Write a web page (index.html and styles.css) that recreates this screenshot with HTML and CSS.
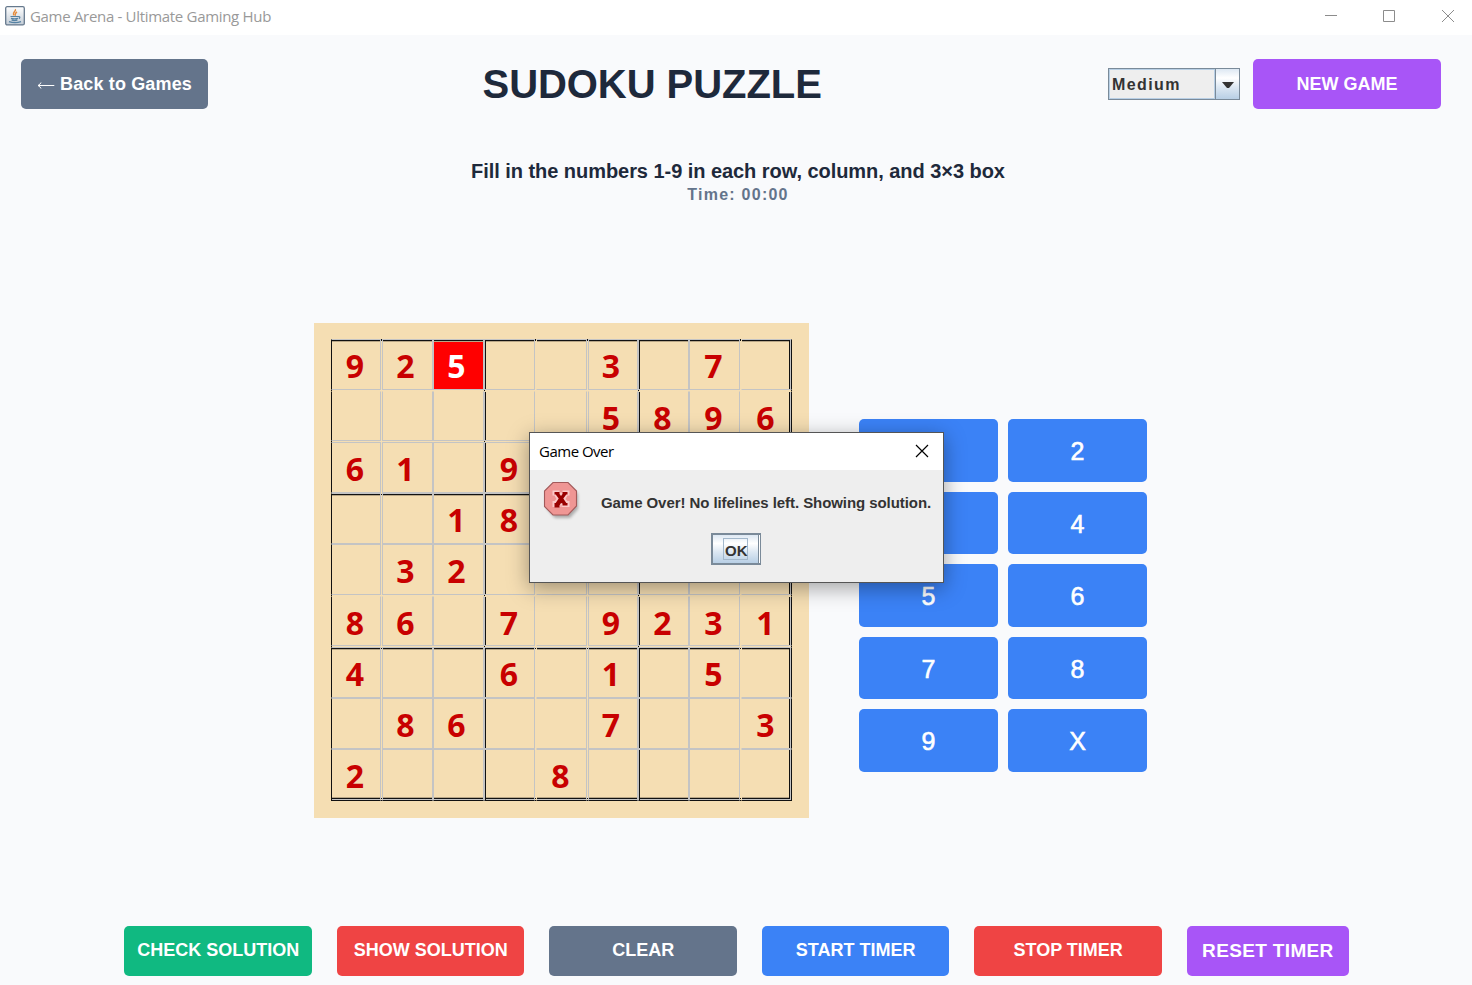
FILE: index.html
```html
<!DOCTYPE html>
<html lang="en">
<head>
<meta charset="utf-8">
<title>Game Arena - Ultimate Gaming Hub</title>
<link rel="stylesheet" href="styles.css">
</head>
<body>
<div class="titlebar">
  <svg class="java" width="20" height="20" viewBox="0 0 20 20">
    <defs><linearGradient id="jg" x1="0" y1="0" x2="0" y2="1"><stop offset="0" stop-color="#fff"/><stop offset="1" stop-color="#c3ccd6"/></linearGradient></defs>
    <rect x=".7" y=".7" width="18.6" height="18.2" rx="1.5" fill="url(#jg)" stroke="#66798d" stroke-width="1.3"/>
    <path d="M10.3 3.2C11.6 5 7 6.4 8.6 9.3M12 6C9.4 7.4 10.6 8.4 10 9.8" fill="none" stroke="#e58a3a" stroke-width="1.5"/>
    <path d="M5.5 10.5h8M6 12.4q3.800 1 7 0M6.600 14.200q3 .8 5.800 0M13.500 10.600q2.500.2.500 2.200" fill="none" stroke="#5682a3" stroke-width="1.200"/>
    <path d="M4 15.600q6 2 12 0" fill="none" stroke="#5682a3" stroke-width="1.200"/>
  </svg>
  <span class="app-title">Game Arena - Ultimate Gaming Hub</span>
  <svg class="winctl" width="130" height="14" viewBox="0 0 130 14" fill="none" stroke="#8c8c8c">
    <path d="M0 6.500h12M58.500 1.500h11v11h-11zM117 1l12 12M129 1l-12 12"/>
  </svg>
</div>

<header class="header">
  <button class="btn slate back"><svg width="18" height="10" viewBox="0 0 18 10" fill="none" stroke="#fff" stroke-width="1"><path d="M1 5.500h16.300M4 2.500q-.8 2-3 3q2.200 1 3 3"/></svg><span>Back to Games</span></button>
  <h1>SUDOKU PUZZLE</h1>
  <div class="combo"><span class="combo-value">Medium</span><span class="combo-arrow"><svg width="12" height="7" viewBox="0 0 12 7"><path d="M0 0h12L7 6H5z" fill="#333"/></svg></span></div>
  <button class="btn purple new">NEW GAME</button>
</header>

<div class="info">
  <p class="hint">Fill in the numbers 1-9 in each row, column, and 3×3 box</p>
  <p class="time">Time: 00:00</p>
</div>

<main class="main">
  <div class="board">
    <div class="grid">
      <div class="row"><b>9</b><b>2</b><b class="wrong">5</b><b></b><b></b><b>3</b><b></b><b>7</b><b></b></div>
      <div class="row"><b></b><b></b><b></b><b></b><b></b><b>5</b><b>8</b><b>9</b><b>6</b></div>
      <div class="row"><b>6</b><b>1</b><b></b><b>9</b><b></b><b></b><b></b><b></b><b></b></div>
      <div class="row"><b></b><b></b><b>1</b><b>8</b><b></b><b></b><b></b><b></b><b></b></div>
      <div class="row"><b></b><b>3</b><b>2</b><b></b><b></b><b>6</b><b>9</b><b>8</b><b></b></div>
      <div class="row"><b>8</b><b>6</b><b></b><b>7</b><b></b><b>9</b><b>2</b><b>3</b><b>1</b></div>
      <div class="row"><b>4</b><b></b><b></b><b>6</b><b></b><b>1</b><b></b><b>5</b><b></b></div>
      <div class="row"><b></b><b>8</b><b>6</b><b></b><b></b><b>7</b><b></b><b></b><b>3</b></div>
      <div class="row"><b>2</b><b></b><b></b><b></b><b>8</b><b></b><b></b><b></b><b></b></div>
    </div>
  </div>
  <div class="pad">
    <button class="key">1</button><button class="key">2</button>
    <button class="key">3</button><button class="key">4</button>
    <button class="key">5</button><button class="key">6</button>
    <button class="key">7</button><button class="key">8</button>
    <button class="key">9</button><button class="key">X</button>
  </div>
</main>

<footer class="footer">
  <button class="btn green">CHECK SOLUTION</button>
  <button class="btn red">SHOW SOLUTION</button>
  <button class="btn slate">CLEAR</button>
  <button class="btn blue">START TIMER</button>
  <button class="btn red">STOP TIMER</button>
  <button class="btn purple reset">RESET TIMER</button>
</footer>

<div class="dialog">
  <div class="dialog-title"><span>Game Over</span>
    <svg width="14" height="14" viewBox="0 0 14 14" fill="none" stroke="#000" stroke-width="1.200"><path d="M1 1l12 12M13 1L1 13"/></svg>
  </div>
  <div class="dialog-body">
    <svg class="error" width="42" height="42" viewBox="0 0 42 42">
      <path d="M12 5h15l8 8v15l-8 9H12l-8-9V14z" fill="#000" opacity=".28" class="soft"/>
      <path d="M10 1.500h15l8.500 8.500v15L25 34H10L1.500 25.500V10z" fill="#ef9694" stroke="#a35a5a" stroke-width="1.100"/>
      <path d="M9.500 9.500h7v2h3v-2h7v5h-2l-2 3.500 2 2h2v6h-8v-2h-1v2h-8v-6h2l2-2-2-3.500h-2z" fill="#fbc9c8"/>
      <path d="M11.500 11h5v2l1.500 2 1.500-2v-2h5v2.500h-1.200l-3 4 3 4.500h1.200v2.500h-5v-2L18 22l-1.500 2.500v2h-5V22h1.200l3-4.500-3-4h-1.200z" fill="#900"/>
    </svg>
    <span class="message">Game Over! No lifelines left. Showing solution.</span>
  </div>
  <button class="ok"><span>OK</span></button>
</div>
</body>
</html>
```
FILE: styles.css
```css
* { box-sizing: border-box; }
body {
  margin: 0; width: 1472px; height: 985px; overflow: hidden;
  position: relative; display: flex; flex-direction: column;
  background: #f9fafc; font-family: "Liberation Sans", Arial, sans-serif;
}
button { border: 0; padding: 0; font-family: inherit; }
p, h1 { margin: 0; }

.titlebar { height: 35px; background: #fff; display: flex; align-items: flex-start; padding-left: 5px; }
.java { margin-top: 6px; }
.app-title {
  margin: 6px 0 0 5px; font: 15px/21px "Open Sans", sans-serif;
  color: #999; white-space: nowrap; letter-spacing: -.31px;
}
.winctl { margin: 9px 17px 0 auto; }

.header { height: 98px; display: flex; align-items: center; padding: 0 31px 0 21px; }
.btn {
  width: 187.5px; height: 49.5px; border-radius: 5px; color: #fff;
  font-size: 18px; font-weight: bold; white-space: nowrap;
}
.slate { background: #64748b; }
.purple { background: #a855f7; }
.green { background: #10b981; }
.red { background: #ef4444; }
.blue { background: #3b82f6; }
.back { width: 187px; display: flex; align-items: center; padding-left: 16px; gap: 5px; letter-spacing: .15px; }
.back svg { margin-top: 2px; }
h1 { margin-left: 274.5px; width: 345px; font-size: 40px; line-height: 46px; color: #1e293b; white-space: nowrap; letter-spacing: -.05px; }
.combo {
  margin-left: auto; width: 132px; height: 32px; display: flex;
  border: 1px solid #7a8a99; box-shadow: inset 0 0 0 1px #b8cfe5; background: #eee;
}
.combo-value {
  flex: 1; padding: 7px 0 0 3px; font-size: 16px; line-height: 18px; font-weight: bold;
  letter-spacing: 1.4px; color: #333; border-right: 1px solid #b8cfe5;
}
.combo-arrow {
  width: 24px; border-left: 1px solid #7a8a99; display: grid; place-items: center; padding-top: 2px;
  background: linear-gradient(#dde8f3, #fff 30%, #dde8f3 60%, #b8cfe5);
}
.new { margin-left: 13px; width: 188px; }

.info { padding-top: 26px; height: 190px; display: flex; flex-direction: column; align-items: center; padding-left: 4px; }
.hint { font-size: 20px; line-height: 24px; font-weight: bold; color: #1e293b; letter-spacing: -.05px; }
.time { font-size: 16px; line-height: 18px; margin-top: 3px; font-weight: bold; color: #64748b; letter-spacing: 1.25px; }

.main { display: flex; align-items: flex-start; padding-left: 314px; height: 603px; }
.board { width: 495px; height: 495px; padding: 16px 17px; background: #f5deb3; }
.grid {
  width: 461px; height: 462px; display: grid;
  grid-template-rows: 52px 51px 51px 51px 52px 51px 51px 51px 52px;
  background:
    linear-gradient(#111, #111) 0 0 / 1px 100% no-repeat,
    linear-gradient(#111, #111) 153px 0 / 1px 100% no-repeat,
    linear-gradient(#111, #111) 307px 0 / 1px 100% no-repeat,
    linear-gradient(#111, #111) 460px 0 / 1px 100% no-repeat,
    linear-gradient(#111, #111) 0 0 / 100% 2px no-repeat,
    linear-gradient(#111, #111) 0 309px / 100% 1px no-repeat,
    linear-gradient(#111, #111) 0 155px / 100% 1px no-repeat,
    linear-gradient(#111, #111) 0 459px / 100% 1px no-repeat,
    linear-gradient(#111, #111) 0 461px / 100% 1px no-repeat;
}
.row { display: grid; grid-template-columns: 51px 51px 51px 52px 52px 50px 51px 52px 51px; }
.row:nth-child(1), .row:nth-child(2), .row:nth-child(5), .row:nth-child(6) { padding-bottom: 1px; }
.row b {
  border: 1px solid #c4c4c4; background: #f5deb3;
  display: flex; justify-content: center; align-items: center; min-height: 0;
  font: bold 32px/40px "Open Sans", sans-serif; color: #c80000;
  padding: 3px 2px 0 0;
}
.row b:nth-child(2), .row b:nth-child(3), .row b:nth-child(6) { padding-right: 4px; }
.row b:nth-child(4) { padding-right: 1px; }
.row b:nth-child(1), .row b:nth-child(4), .row b:nth-child(5), .row b:nth-child(8) { margin-right: 1px; }
.row b:nth-child(5), .row b:nth-child(9) { border-left-color: #f5deb3; }
.row b:nth-child(1) { border-left-color: #111; }
.row:nth-child(2) b, .row:nth-child(6) b { border-top-color: #f5deb3; }
.row b:nth-child(4), .row b:nth-child(7) { box-shadow: inset 1px 0 #111; }
.row b:nth-child(9) { border-right-color: #111; box-shadow: inset -1px 0 #c4c4c4, inset -2px 0 #111; }
.row:nth-child(3n+1) b { box-shadow: inset 0 1px #111, inset 0 2px #b8a686; }
.row:nth-child(3n+1) b:nth-child(4), .row:nth-child(3n+1) b:nth-child(7) { box-shadow: inset 1px 0 #111, inset 0 1px #111, inset 0 2px #b8a686; }
.row:nth-child(3n+1) b:nth-child(9) { box-shadow: inset -1px 0 #c4c4c4, inset -2px 0 #111, inset 0 1px #111, inset 0 2px #b8a686; }
.row:nth-child(9) b { border-bottom-color: #111; box-shadow: inset 0 -1px #c4c4c4, inset 0 -2px #111, inset 0 -3px #b8a686; padding-top: 1px; }
.row:nth-child(9) b:nth-child(4), .row:nth-child(9) b:nth-child(7) { box-shadow: inset 1px 0 #111, inset 0 -1px #c4c4c4, inset 0 -2px #111, inset 0 -3px #b8a686; }
.row:nth-child(9) b:nth-child(9) { box-shadow: inset -1px 0 #c4c4c4, inset 0 -1px #c4c4c4, inset -2px 0 #111, inset 0 -2px #111, inset 0 -3px #b8a686; }
.row b.wrong { background: #f00; color: #fff; }

.pad {
  margin: 96.4px 0 0 50px; display: grid;
  grid-template-columns: 139px 139px; grid-auto-rows: 62.5px; gap: 10px;
}
.key {
  background: #3b82f6; color: #fff; border-radius: 5px;
  font-size: 25px; -webkit-text-stroke: .6px #fff; padding-top: 2px;
}

.footer { display: flex; gap: 25px; padding-left: 124.4px; }
.footer .btn { flex: none; padding-bottom: 1px; }
.footer .reset { width: 162px; font-size: 19px; letter-spacing: .35px; padding: 0; }

.dialog {
  position: absolute; left: 529px; top: 432px; width: 415px; height: 151px;
  border: 1px solid #555; background: #eee;
  box-shadow: 0 5px 20px rgba(0, 0, 0, .36);
}
.dialog-title {
  height: 37px; background: #fff; display: flex; justify-content: space-between; align-items: center;
  padding: 0 14px 0 9px; font: 15px/21px "Open Sans", sans-serif; color: #000; letter-spacing: -.5px;
}
.dialog-title svg { margin-top: -1px; }
.dialog-body { display: flex; height: 63px; padding: 11px 0 0 13px; }
.soft { filter: blur(1.500px); }
.message { margin: 13px 0 0 16px; font-size: 15px; line-height: 18px; font-weight: bold; color: #333; letter-spacing: -.07px; white-space: nowrap; }
.ok {
  display: block; margin-left: 181px; width: 50px; height: 32px;
  border: 2px solid #7a8a99; border-right-width: 1px; box-shadow: inset -1px 0 #fff, inset -2px 0 #7a8a99;
  background: linear-gradient(#dde8f3, #fff 30%, #dde8f3 60%, #b8cfe5);
  font-size: 15px; font-weight: bold; color: #333;
}
.ok span { display: block; width: 25px; height: 22px; line-height: 23px; padding-left: 1px; margin-left: 10px; border: 1px solid #a3b8cc; white-space: nowrap; }
```
